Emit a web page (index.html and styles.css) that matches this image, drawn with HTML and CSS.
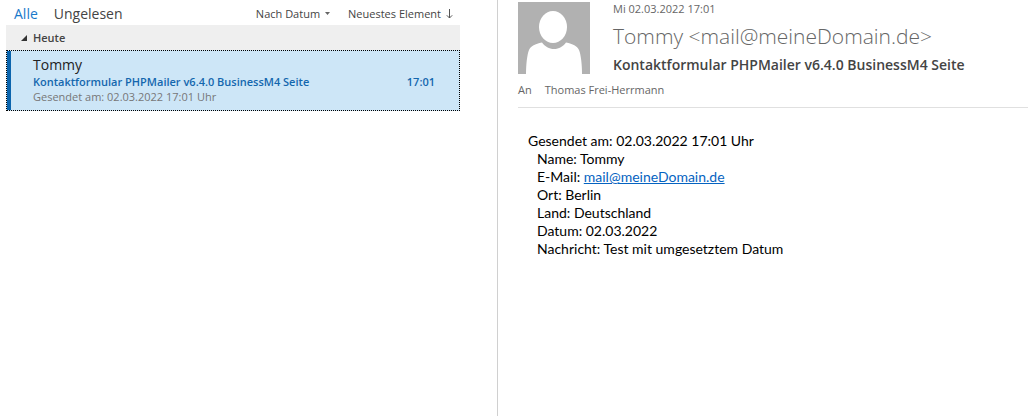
FILE: index.html
```
<!DOCTYPE html>
<html lang="de">
<head>
    <meta charset="UTF-8">
    <meta name="viewport" content="width=device-width, initial-scale=1.0">
    <title>Posteingang</title>
    <link rel="stylesheet" href="styles.css">
</head>
<body>
    <div class="mail">
        <section class="list">
            <div class="toolbar">
                <button type="button" class="filter active">Alle</button>
                <button type="button" class="filter">Ungelesen</button>
                <button type="button" class="sort sort-by">Nach Datum
                    <svg width="5" height="3" viewBox="0 0 5 3"><path d="M0 0h5L2.5 3z" fill="#666"/></svg>
                </button>
                <button type="button" class="sort">Neuestes Element
                    <svg width="7" height="10" viewBox="0 0 7 10"><path d="M3.5 0v9M.8 6.3l2.7 2.7 2.7-2.7" fill="none" stroke="#555"/></svg>
                </button>
            </div>
            <button type="button" class="group">
                <svg width="6" height="6" viewBox="0 0 6 6"><path d="M6 0v6H0z" fill="#333"/></svg>
                Heute
            </button>
            <article class="item">
                <div class="item-from">Tommy</div>
                <div class="item-row">
                    <span class="item-subject">Kontaktformular PHPMailer v6.4.0 BusinessM4 Seite</span>
                    <time class="item-time">17:01</time>
                </div>
                <div class="item-preview">Gesendet am: 02.03.2022 17:01 Uhr</div>
            </article>
        </section>

        <main class="reading">
            <header class="header">
                <div class="sender">
                    <svg class="avatar" viewBox="0 0 72 72">
                        <rect width="72" height="72" fill="#b1b1b1"/>
                        <path d="M8 72c0-9 1-19 3-24 2-4 6-6 13-7.500 3 4 7 6.500 12 6.500s9-2.500 12-6.500c7 1.500 11 3.500 13 7.500 2 5 3 15 3 24z" fill="#fff"/>
                        <ellipse cx="35" cy="25" rx="14" ry="16" fill="#fff"/>
                    </svg>
                    <div class="sender-text">
                        <div class="date">Mi 02.03.2022 17:01</div>
                        <div class="from">Tommy &lt;mail@meineDomain.de&gt;</div>
                        <h1 class="subject">Kontaktformular PHPMailer v6.4.0 BusinessM4 Seite</h1>
                    </div>
                </div>
                <div class="recipients">
                    <span>An</span>
                    <span>Thomas Frei-Herrmann</span>
                </div>
            </header>
            <div class="message">
                <p>Gesendet am: 02.03.2022 17:01 Uhr</p>
                <div class="fields">
                    <p>Name: Tommy</p>
                    <p>E-Mail: <a href="mailto:mail@meineDomain.de">mail@meineDomain.de</a></p>
                    <p>Ort: Berlin</p>
                    <p>Land: Deutschland</p>
                    <p>Datum: 02.03.2022</p>
                    <p>Nachricht: Test mit umgesetztem Datum</p>
                </div>
            </div>
        </main>
    </div>
</body>
</html>
```
FILE: styles.css
```
* {
    box-sizing: border-box;
}
body {
    margin: 0;
    background-color: #fff;
    color: #444;
    font-family: "Open Sans", "Noto Sans", sans-serif;
    font-size: 11px;
}
button {
    padding: 0;
    border: 0;
    background: none;
    color: inherit;
    font: inherit;
}
p {
    margin: 0;
}
.mail {
    display: grid;
    grid-template-columns: minmax(0, 498fr) minmax(0, 530fr);
    min-height: 100vh;
}

/* message list */
.list {
    padding: 2px 37px 0 6px;
    border-right: 1px solid #d0d0d0;
}
.toolbar {
    display: flex;
    align-items: center;
    height: 23px;
    padding: 0 7px 0 8px;
    white-space: nowrap;
}
.filter {
    margin-right: 16px;
    font-size: 14px;
}
.filter.active {
    color: #1979ca;
}
.sort {
    display: flex;
    align-items: center;
    gap: 5px;
}
.sort-by {
    margin-left: auto;
    margin-right: 18px;
}
.group {
    display: flex;
    align-items: center;
    gap: 6px;
    width: 100%;
    height: 25px;
    padding-left: 15px;
    background-color: #efefef;
    font-weight: 600;
}
.item {
    padding: 4px 24px 6px 26px;
    border: 1px dotted #000;
    background-color: #cde6f7;
    box-shadow: inset 4px 0 #0a64ad;
}
.item-from {
    color: #222;
    font-size: 14px;
    line-height: 19px;
}
.item-row {
    display: flex;
    justify-content: space-between;
    color: #1467ae;
    font-weight: 600;
    line-height: 15px;
    white-space: nowrap;
}
.item-preview {
    color: #777;
    line-height: 15px;
}

/* reading pane */
.header {
    margin-left: 20px;
    padding-top: 2px;
    border-bottom: 1px solid #e0e0e0;
}
.sender {
    display: flex;
    gap: 23px;
}
.avatar {
    flex: none;
    width: 72px;
    height: 72px;
}
.date {
    color: #666;
    line-height: 14px;
}
.from {
    color: #666;
    font-size: 21px;
    font-weight: 300;
    line-height: 40px;
}
.subject {
    margin: 0;
    font-size: 14px;
    font-weight: 600;
    line-height: 18px;
}
.recipients {
    display: flex;
    gap: 13px;
    padding: 8px 0 10px;
    color: #666;
    line-height: 15px;
}
.message {
    padding: 24px 30px;
    color: #000;
    font-family: Lato, "Liberation Sans", sans-serif;
    font-size: 14px;
    line-height: 18px;
}
.message a {
    color: #0563c1;
}
.fields {
    padding-left: 9px;
}
```
